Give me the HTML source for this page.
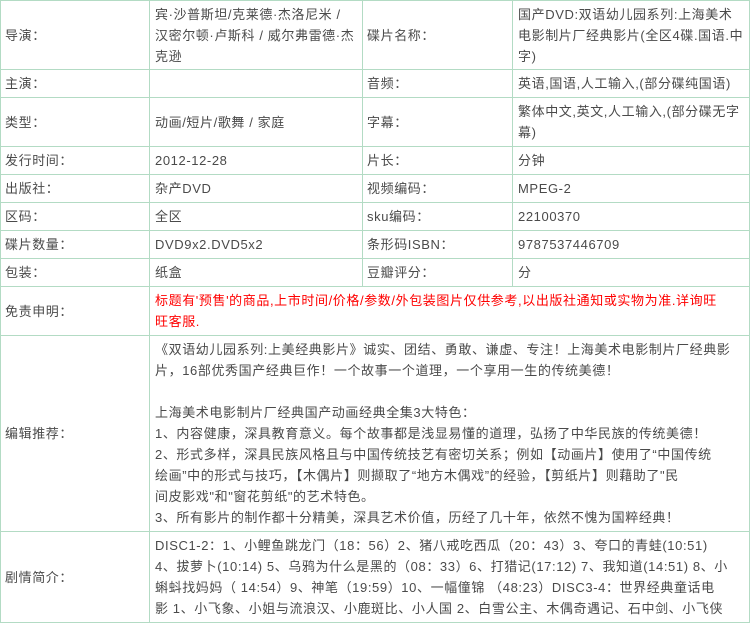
<!DOCTYPE html>
<html><head><meta charset="utf-8">
<style>
html,body{margin:0;padding:0;background:#fff;width:750px;height:624px;overflow:hidden}
table{border-collapse:collapse;table-layout:fixed;width:749px;font-family:"Liberation Sans","Noto Sans CJK SC",sans-serif;font-size:13px;color:#4a4a4a;line-height:21px;letter-spacing:0.6px}
td{border:1px solid #b3dbc4;padding:0 4px;vertical-align:middle;white-space:nowrap;overflow:hidden}
td.l{padding-left:4px}
td.v{padding-left:5px}
.red{color:#f00}
</style></head><body>
<table>
<colgroup><col style="width:149px"><col style="width:213px"><col style="width:150px"><col style="width:237px"></colgroup>
<tr style="height:69px"><td class="l">导演：</td><td class="v">宾·沙普斯坦/克莱德·杰洛尼米 /<br>汉密尔顿·卢斯科 / 威尔弗雷德·杰<br>克逊</td><td class="l">碟片名称：</td><td class="v">国产DVD:双语幼儿园系列:上海美术<br>电影制片厂经典影片(全区4碟.国语.中<br>字)</td></tr>
<tr style="height:28px"><td class="l">主演：</td><td class="v"></td><td class="l">音频：</td><td class="v">英语,国语,人工输入,(部分碟纯国语)</td></tr>
<tr style="height:49px"><td class="l">类型：</td><td class="v">动画/短片/歌舞 / 家庭</td><td class="l">字幕：</td><td class="v">繁体中文,英文,人工输入,(部分碟无字<br>幕)</td></tr>
<tr style="height:28px"><td class="l">发行时间：</td><td class="v">2012-12-28</td><td class="l">片长：</td><td class="v">分钟</td></tr>
<tr style="height:28px"><td class="l">出版社：</td><td class="v">杂产DVD</td><td class="l">视频编码：</td><td class="v">MPEG-2</td></tr>
<tr style="height:28px"><td class="l">区码：</td><td class="v">全区</td><td class="l">sku编码：</td><td class="v">22100370</td></tr>
<tr style="height:28px"><td class="l">碟片数量：</td><td class="v">DVD9x2.DVD5x2</td><td class="l">条形码ISBN：</td><td class="v">9787537446709</td></tr>
<tr style="height:28px"><td class="l">包装：</td><td class="v">纸盒</td><td class="l">豆瓣评分：</td><td class="v">分</td></tr>
<tr style="height:49px"><td class="l">免责申明：</td><td class="v red" colspan="3">标题有'预售'的商品,上市时间/价格/参数/外包装图片仅供参考,以出版社通知或实物为准.详询旺<br>旺客服.</td></tr>
<tr style="height:196px"><td class="l">编辑推荐：</td><td class="v" colspan="3">《双语幼儿园系列:上美经典影片》诚实、团结、勇敢、谦虚、专注！上海美术电影制片厂经典影<br>片，16部优秀国产经典巨作！一个故事一个道理，一个享用一生的传统美德！<br>&nbsp;<br>上海美术电影制片厂经典国产动画经典全集3大特色：<br>1、内容健康，深具教育意义。每个故事都是浅显易懂的道理，弘扬了中华民族的传统美德！<br>2、形式多样，深具民族风格且与中国传统技艺有密切关系；例如【动画片】使用了“中国传统<br>绘画”中的形式与技巧，【木偶片】则撷取了“地方木偶戏”的经验，【剪纸片】则藉助了"民<br>间皮影戏"和"窗花剪纸"的艺术特色。<br>3、所有影片的制作都十分精美，深具艺术价值，历经了几十年，依然不愧为国粹经典！</td></tr>
<tr style="height:91px"><td class="l">剧情简介：</td><td class="v" colspan="3">DISC1-2：1、小鲤鱼跳龙门（18：56）2、猪八戒吃西瓜（20：43）3、夸口的青蛙(10:51)<br>4、拔萝卜(10:14) 5、乌鸦为什么是黑的（08：33）6、打猎记(17:12) 7、我知道(14:51) 8、小<br>蝌蚪找妈妈（ 14:54）9、神笔（19:59）10、一幅僮锦 （48:23）DISC3-4：世界经典童话电<br>影 1、小飞象、小姐与流浪汉、小鹿斑比、小人国 2、白雪公主、木偶奇遇记、石中剑、小飞侠</td></tr>
</table>
</body></html>
